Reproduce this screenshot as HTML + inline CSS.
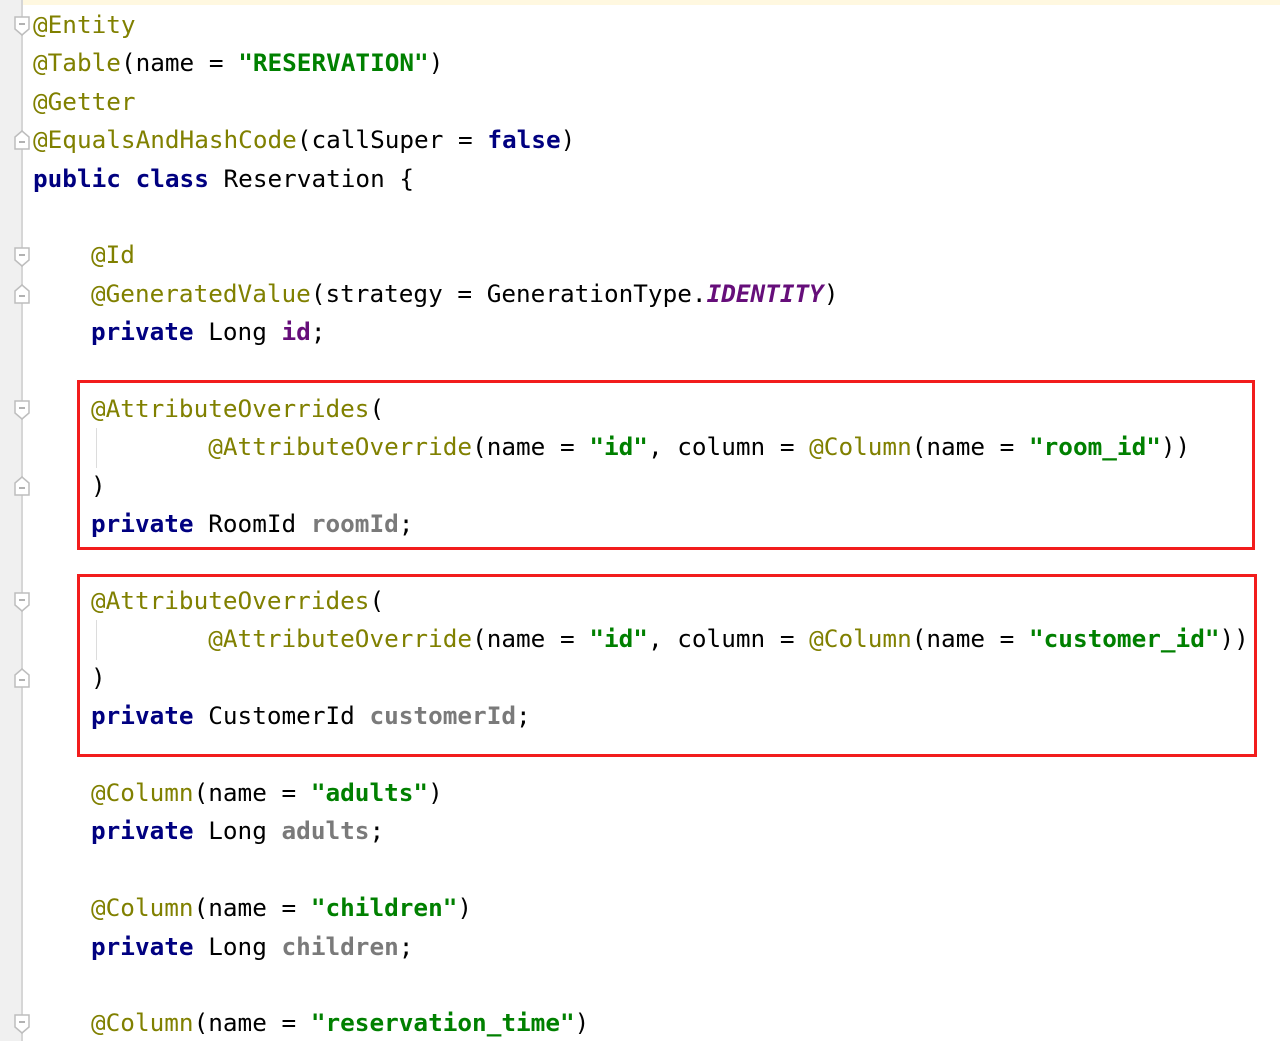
<!DOCTYPE html>
<html><head><meta charset="utf-8"><style>
html,body{margin:0;padding:0;background:#fff;width:1280px;height:1041px;overflow:hidden;position:relative}
.top{position:absolute;left:22px;top:0;width:1258px;height:5px;background:#fff8e0}
.gut{position:absolute;left:0;top:0;width:21px;height:1041px;background:#f0f0f0}
.gl{position:absolute;left:21px;top:0;width:2px;height:1041px;background:#d6d6d6}
.l{position:absolute;white-space:pre;font-family:"DejaVu Sans Mono","Liberation Mono",monospace;font-size:24.35px;line-height:38.4px;color:#000;height:38.4px}
.a{color:#808000}.k{color:#000080;font-weight:bold}.s{color:#008000;font-weight:bold}
.f{color:#660e7a;font-weight:bold}.i{font-style:italic}.g{color:#7a7a7a;font-weight:bold}
.box{position:absolute;border:3px solid #f21d1d;box-sizing:border-box}
.fold{position:absolute;left:14px}
.ig{position:absolute;left:96px;width:1px;background:#dcdcdc}
</style></head><body>
<div class="top"></div><div class="gut"></div><div class="gl"></div>
<div class="l" style="left:33px;top:6px"><span class="a">@Entity</span></div>
<div class="l" style="left:33px;top:44.4px"><span class="a">@Table</span>(name = <span class="s">"RESERVATION"</span>)</div>
<div class="l" style="left:33px;top:82.8px"><span class="a">@Getter</span></div>
<div class="l" style="left:33px;top:121.2px"><span class="a">@EqualsAndHashCode</span>(callSuper = <span class="k">false</span>)</div>
<div class="l" style="left:33px;top:159.6px"><span class="k">public class</span> Reservation {</div>
<div class="l" style="left:91px;top:236.4px"><span class="a">@Id</span></div>
<div class="l" style="left:91px;top:274.8px"><span class="a">@GeneratedValue</span>(strategy = GenerationType.<span class="f i">IDENTITY</span>)</div>
<div class="l" style="left:91px;top:313.2px"><span class="k">private</span> Long <span class="f">id</span>;</div>
<div class="l" style="left:91px;top:390px"><span class="a">@AttributeOverrides</span>(</div>
<div class="l" style="left:91px;top:428.4px">        <span class="a">@AttributeOverride</span>(name = <span class="s">"id"</span>, column = <span class="a">@Column</span>(name = <span class="s">"room_id"</span>))</div>
<div class="l" style="left:91px;top:466.8px">)</div>
<div class="l" style="left:91px;top:505.2px"><span class="k">private</span> RoomId <span class="g">roomId</span>;</div>
<div class="l" style="left:91px;top:582px"><span class="a">@AttributeOverrides</span>(</div>
<div class="l" style="left:91px;top:620.4px">        <span class="a">@AttributeOverride</span>(name = <span class="s">"id"</span>, column = <span class="a">@Column</span>(name = <span class="s">"customer_id"</span>))</div>
<div class="l" style="left:91px;top:658.8px">)</div>
<div class="l" style="left:91px;top:697.2px"><span class="k">private</span> CustomerId <span class="g">customerId</span>;</div>
<div class="l" style="left:91px;top:774px"><span class="a">@Column</span>(name = <span class="s">"adults"</span>)</div>
<div class="l" style="left:91px;top:812.4px"><span class="k">private</span> Long <span class="g">adults</span>;</div>
<div class="l" style="left:91px;top:889.2px"><span class="a">@Column</span>(name = <span class="s">"children"</span>)</div>
<div class="l" style="left:91px;top:927.6px"><span class="k">private</span> Long <span class="g">children</span>;</div>
<div class="l" style="left:91px;top:1004.4px"><span class="a">@Column</span>(name = <span class="s">"reservation_time"</span>)</div>
<div class="ig" style="top:428px;height:40px"></div>
<div class="ig" style="top:620px;height:40px"></div>
<div class="box" style="left:77px;top:380px;width:1178px;height:170px"></div>
<div class="box" style="left:77px;top:574px;width:1180px;height:183px"></div>
<svg class="fold" style="top:16px" width="16" height="20"><path d="M1 1H15V13L8 19L1 13Z" fill="#fff" stroke="#bdbdbd" stroke-width="1.5"/><path d="M5 8H11" stroke="#999" stroke-width="1.5"/></svg>
<svg class="fold" style="top:130px" width="16" height="20"><path d="M1 19H15V7L8 1L1 7Z" fill="#fff" stroke="#bdbdbd" stroke-width="1.5"/><path d="M5 12H11" stroke="#999" stroke-width="1.5"/></svg>
<svg class="fold" style="top:247px" width="16" height="20"><path d="M1 1H15V13L8 19L1 13Z" fill="#fff" stroke="#bdbdbd" stroke-width="1.5"/><path d="M5 8H11" stroke="#999" stroke-width="1.5"/></svg>
<svg class="fold" style="top:284px" width="16" height="20"><path d="M1 19H15V7L8 1L1 7Z" fill="#fff" stroke="#bdbdbd" stroke-width="1.5"/><path d="M5 12H11" stroke="#999" stroke-width="1.5"/></svg>
<svg class="fold" style="top:400px" width="16" height="20"><path d="M1 1H15V13L8 19L1 13Z" fill="#fff" stroke="#bdbdbd" stroke-width="1.5"/><path d="M5 8H11" stroke="#999" stroke-width="1.5"/></svg>
<svg class="fold" style="top:476px" width="16" height="20"><path d="M1 19H15V7L8 1L1 7Z" fill="#fff" stroke="#bdbdbd" stroke-width="1.5"/><path d="M5 12H11" stroke="#999" stroke-width="1.5"/></svg>
<svg class="fold" style="top:592px" width="16" height="20"><path d="M1 1H15V13L8 19L1 13Z" fill="#fff" stroke="#bdbdbd" stroke-width="1.5"/><path d="M5 8H11" stroke="#999" stroke-width="1.5"/></svg>
<svg class="fold" style="top:668px" width="16" height="20"><path d="M1 19H15V7L8 1L1 7Z" fill="#fff" stroke="#bdbdbd" stroke-width="1.5"/><path d="M5 12H11" stroke="#999" stroke-width="1.5"/></svg>
<svg class="fold" style="top:1014px" width="16" height="20"><path d="M1 1H15V13L8 19L1 13Z" fill="#fff" stroke="#bdbdbd" stroke-width="1.5"/><path d="M5 8H11" stroke="#999" stroke-width="1.5"/></svg>
</body></html>
